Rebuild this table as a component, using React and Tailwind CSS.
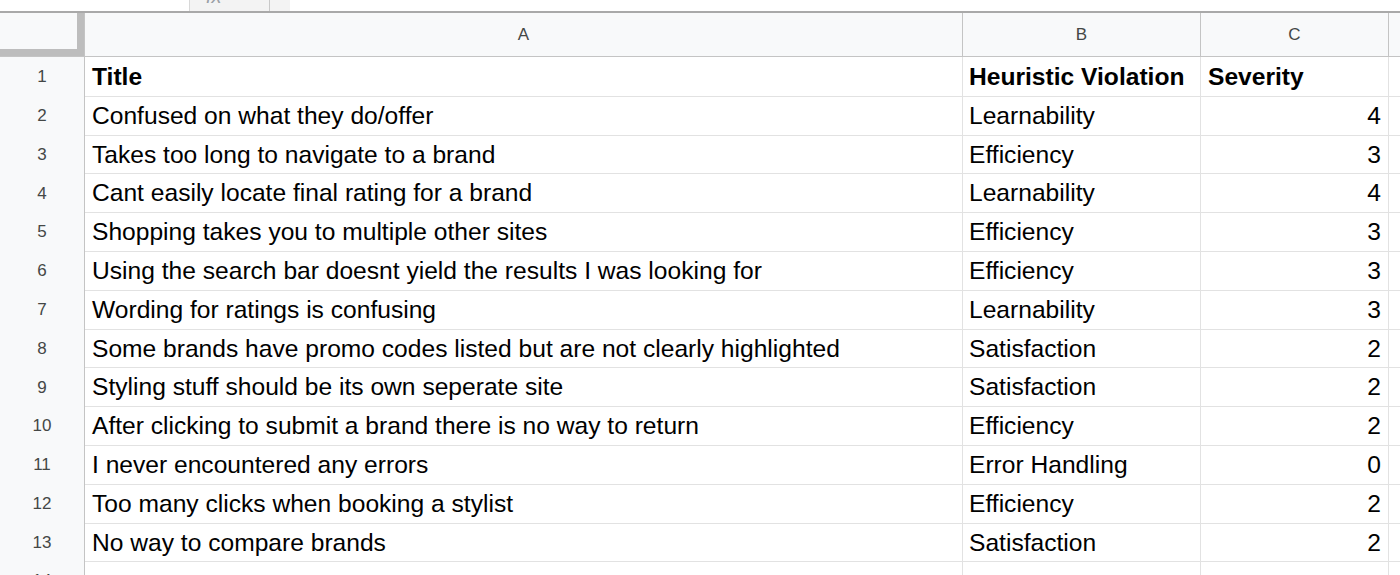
const rows = [
  ["Title", "Heuristic Violation", "Severity", true],
  ["Confused on what they do/offer", "Learnability", "4"],
  ["Takes too long to navigate to a brand", "Efficiency", "3"],
  ["Cant easily locate final rating for a brand", "Learnability", "4"],
  ["Shopping takes you to multiple other sites", "Efficiency", "3"],
  ["Using the search bar doesnt yield the results I was looking for", "Efficiency", "3"],
  ["Wording for ratings is confusing", "Learnability", "3"],
  ["Some brands have promo codes listed but are not clearly highlighted", "Satisfaction", "2"],
  ["Styling stuff should be its own seperate site", "Satisfaction", "2"],
  ["After clicking to submit a brand there is no way to return", "Efficiency", "2"],
  ["I never encountered any errors", "Error Handling", "0"],
  ["Too many clicks when booking a stylist", "Efficiency", "2"],
  ["No way to compare brands", "Satisfaction", "2"],
  ["", "", ""],
];

const cols = "grid grid-cols-[85px_878px_238px_188px_1fr]";

const App = () => {
  return (
    <div className="h-[575px] w-[1400px] overflow-hidden bg-white font-['Liberation_Sans',Arial,sans-serif]">
      {/* formula bar remnant */}
      <div className="flex h-[11px]">
        <div className="ml-[189px] flex w-[101px] overflow-hidden border-l border-[#d8d8d8] bg-[#f3f3f3]">
          <div className="w-[80px] overflow-hidden border-r border-[#c8c8c8] pl-[16px]">
            <span className="-mt-[14px] block text-[20px] italic leading-[20px] text-[#9aa0a6]">fx</span>
          </div>
        </div>
      </div>
      <div className="h-[2px] bg-[#a9a9a9]" />

      {/* column headers */}
      <div className={`${cols} h-[44px] bg-[#f8f9fa] text-[17px] text-[#444746]`}>
        <div className="relative border-r border-b border-[#c4c4c4]">
          <div className="absolute right-0 top-0 h-[43px] w-[7px] bg-[#bdbdbd]" />
          <div className="absolute bottom-0 left-0 h-[7px] w-full bg-[#bdbdbd]" />
        </div>
        <div className="flex items-center justify-center border-r border-b border-[#c4c4c4]">A</div>
        <div className="flex items-center justify-center border-r border-b border-[#c4c4c4]">B</div>
        <div className="flex items-center justify-center border-r border-b border-[#c4c4c4]">C</div>
        <div className="border-b border-[#c4c4c4]" />
      </div>

      {rows.map(([a, b, c, bold], i) => (
        <div key={i} className={`${cols} h-[38.8px] text-[24.6px] text-black`}>
          <div className="flex items-center justify-center border-r border-b border-[#c4c4c4] bg-[#f8f9fa] pt-[1px] text-[17px] text-[#444746]">
            {i + 1}
          </div>
          <div className={`flex items-center whitespace-nowrap border-r border-b border-[#e2e2e2] pl-[7px] pt-[2px] ${bold ? "font-bold" : ""}`}>
            {a}
          </div>
          <div className={`flex items-center whitespace-nowrap border-r border-b border-[#e2e2e2] pl-[6px] pt-[2px] ${bold ? "font-bold" : ""}`}>
            {b}
          </div>
          <div className={`flex items-center whitespace-nowrap border-r border-b border-[#e2e2e2] pt-[2px] ${bold ? "pl-[7px] font-bold" : "justify-end pr-[7px]"}`}>
            {c}
          </div>
          <div className="border-b border-[#e2e2e2]" />
        </div>
      ))}
    </div>
  );
};

export default App;
